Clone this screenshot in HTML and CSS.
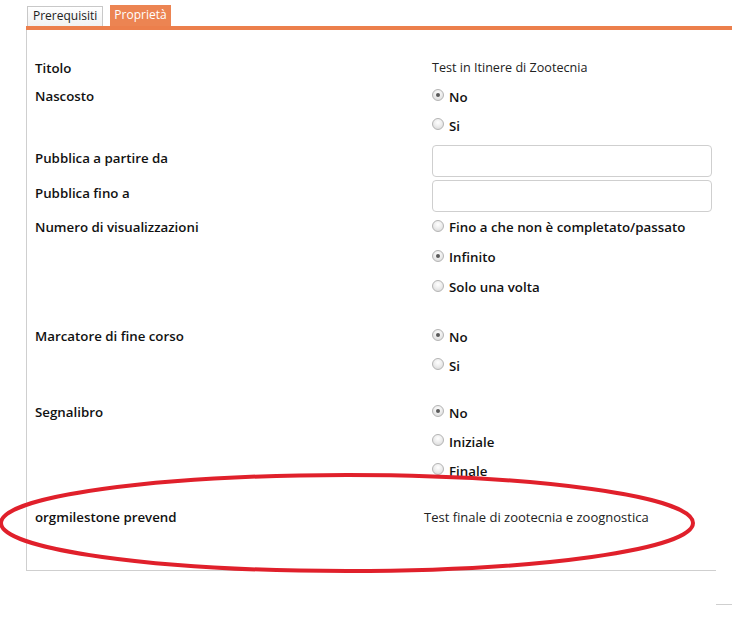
FILE: index.html
```html
<!DOCTYPE html>
<html lang="it">
<head>
<meta charset="utf-8">
<title>Proprietà</title>
<link rel="stylesheet" href="styles.css">
</head>
<body>
<div class="page">
  <div class="tabs">
    <div class="tab">Prerequisiti</div>
    <div class="tab active">Proprietà</div>
  </div>
  <div class="tabbar"></div>
  <div class="panel">
    <div class="row r-titolo">
      <div class="label">Titolo</div>
      <div class="value text">Test in Itinere di Zootecnia</div>
    </div>
    <div class="row r-nascosto">
      <div class="label">Nascosto</div>
      <div class="value options">
        <div class="opt"><span class="radio checked"></span>No</div>
        <div class="opt"><span class="radio"></span>Si</div>
      </div>
    </div>
    <div class="row r-input first">
      <div class="label">Pubblica a partire da</div>
      <div class="value"><div class="input"></div></div>
    </div>
    <div class="row r-input">
      <div class="label">Pubblica fino a</div>
      <div class="value"><div class="input"></div></div>
    </div>
    <div class="row r-numero">
      <div class="label">Numero di visualizzazioni</div>
      <div class="value options wide">
        <div class="opt"><span class="radio"></span>Fino a che non è completato/passato</div>
        <div class="opt"><span class="radio checked"></span>Infinito</div>
        <div class="opt"><span class="radio"></span>Solo una volta</div>
      </div>
    </div>
    <div class="row r-marcatore">
      <div class="label">Marcatore di fine corso</div>
      <div class="value options">
        <div class="opt"><span class="radio checked"></span>No</div>
        <div class="opt"><span class="radio"></span>Si</div>
      </div>
    </div>
    <div class="row r-segnalibro">
      <div class="label">Segnalibro</div>
      <div class="value options">
        <div class="opt"><span class="radio checked"></span>No</div>
        <div class="opt"><span class="radio"></span>Iniziale</div>
        <div class="opt"><span class="radio"></span>Finale</div>
      </div>
    </div>
    <div class="row r-milestone">
      <div class="label">orgmilestone prevend</div>
      <div class="value text">Test finale di zootecnia e zoognostica</div>
    </div>
    <svg class="annotation" width="704" height="106" viewBox="0 0 704 106">
      <ellipse cx="350" cy="52" rx="346" ry="48" fill="none" stroke="#e0202b" stroke-width="4"/>
    </svg>
  </div>
  <div class="tail"></div>
</div>
</body>
</html>
```

FILE: styles.css
```css
html, body {
  margin: 0;
  padding: 0;
  background: #fff;
}

body {
  font-family: "Open Sans", "DejaVu Sans", sans-serif;
  color: #111;
  width: 732px;
  height: 640px;
  overflow: hidden;
}

.page {
  position: relative;
  padding-top: 5px;
}

.tabs {
  display: flex;
  align-items: flex-end;
  gap: 7px;
  margin-left: 27px;
  height: 21px;
}

.tab {
  box-sizing: border-box;
  height: 20px;
  padding: 0 5px;
  font-size: 12px;
  line-height: 18px;
  color: #222;
  border: 1px solid #c8c8c8;
  border-bottom: none;
  background: linear-gradient(#ffffff, #f1f1f1);
}

.tab.active {
  height: 21px;
  line-height: 20px;
  color: #fff;
  border: none;
  padding: 0 4px;
  background: #ec8452;
}

.tabbar {
  height: 4px;
  margin-left: 26px;
  background: #ec7f4c;
}

.panel {
  position: relative;
  margin-left: 26px;
  width: 690px;
  box-sizing: border-box;
  border-left: 1px solid #cfcfcf;
  border-bottom: 1px solid #cfcfcf;
  padding: 24px 0 38px 8px;
}

.row {
  display: grid;
  grid-template-columns: 397px 280px;
  align-items: start;
}

.label {
  font-size: 13.3px;
  font-weight: 600;
  line-height: 29px;
  color: #111;
}

.text {
  font-size: 13px;
  line-height: 28px;
  color: #222;
}

.r-titolo .label,
.r-titolo .text {
  line-height: 28px;
}

.r-titolo .text {
  font-size: 12.6px;
}

.options {
  display: flex;
  flex-direction: column;
}

.opt {
  display: flex;
  align-items: center;
  height: 29px;
  font-size: 13.3px;
  font-weight: 600;
  color: #111;
  white-space: nowrap;
}

.radio {
  box-sizing: border-box;
  width: 12px;
  height: 12px;
  margin-right: 5px;
  margin-top: -3px;
  border-radius: 50%;
  border: 1px solid #b4b4b4;
  background: radial-gradient(circle at 50% 35%, #ffffff 0%, #eeeeee 45%, #d4d4d4 100%);
  display: flex;
  align-items: center;
  justify-content: center;
  flex: none;
}

.radio.checked::after {
  content: "";
  width: 4px;
  height: 4px;
  border-radius: 50%;
  background: #5a5a5a;
}

.r-input {
  margin-top: 3px;
}

.r-input.first {
  margin-top: 5px;
}

.r-input .label {
  line-height: 26px;
}

.input {
  box-sizing: border-box;
  width: 280px;
  height: 32px;
  border: 1px solid #cfcfcf;
  border-radius: 4px;
  background: #fff;
}

.r-numero .label,
.r-numero .opt {
  line-height: 30px;
  height: 30px;
}

.r-marcatore {
  margin-top: 20px;
}

.r-segnalibro {
  margin-top: 18px;
}

.r-milestone {
  margin-top: 18px;
  grid-template-columns: 389px 300px;
}

.r-milestone .text {
  line-height: 29px;
}

.annotation {
  position: absolute;
  left: -30px;
  top: 441px;
  pointer-events: none;
}

.tail {
  margin-left: 716px;
  margin-top: 33px;
  width: 16px;
  border-top: 1px solid #cfcfcf;
}
```
